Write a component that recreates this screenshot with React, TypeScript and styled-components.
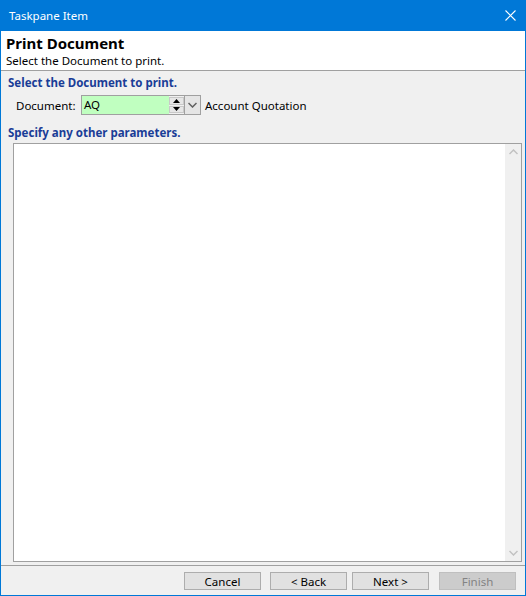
import React from 'react'
import styled, { createGlobalStyle } from 'styled-components'

const Global = createGlobalStyle`
  html, body {
    margin: 0;
    padding: 0;
    background: #ffffff;
  }
  * {
    box-sizing: border-box;
  }
`

const Window = styled.div`
  width: 526px;
  height: 596px;
  display: flex;
  flex-direction: column;
  border: 1px solid #0078d7;
  border-top: none;
  background: #f0f0f0;
  font-family: 'Noto Sans', 'Open Sans', sans-serif;
  font-size: 11.5px;
  color: #000000;
  overflow: hidden;
`

const TitleBar = styled.div`
  height: 31px;
  flex: none;
  display: flex;
  align-items: center;
  justify-content: space-between;
  background: #0078d7;
  color: #ffffff;
  padding-left: 9px;
  margin: 0 -1px;
`

const TitleText = styled.span`
  font-size: 11.5px;
  padding-bottom: 1px;
`

const CloseBtn = styled.div`
  width: 32px;
  height: 31px;
  display: flex;
  align-items: center;
  justify-content: center;
`

const Header = styled.div`
  height: 40px;
  flex: none;
  background: #ffffff;
  border-bottom: 1px solid #a0a0a0;
  padding: 2px 5px 0;
`

const HeaderTitle = styled.div`
  font-weight: 700;
  font-size: 15px;
  line-height: 20px;
`

const HeaderSub = styled.div`
  font-size: 11.5px;
  line-height: 15px;
`

const Body = styled.div`
  flex: 1;
  display: flex;
  flex-direction: column;
  padding: 4px 3px 0 7px;
  min-height: 0;
`

const Section = styled.div<{ $top?: number }>`
  color: #1a3d97;
  font-weight: 700;
  font-size: 11.5px;
  line-height: 16px;
  margin-top: ${(p) => p.$top ?? 0}px;
`

const DocRow = styled.div`
  display: flex;
  align-items: center;
  height: 20px;
  margin-top: 4px;
  padding-left: 8px;
`

const Label = styled.span`
  width: 65px;
`

const Combo = styled.div`
  display: flex;
  width: 120px;
  height: 20px;
  border: 1px solid #a0a0a0;
  background: #c0ffc0;
`

const ComboText = styled.div`
  flex: 1;
  padding-left: 2px;
  line-height: 17px;
`

const Spinner = styled.div`
  width: 15px;
  display: flex;
  flex-direction: column;
  justify-content: center;
  gap: 1px;
  background: #f0f0f0;
  padding: 1px 0;
`

const SpinBtn = styled.div`
  flex: 1;
  display: flex;
  align-items: center;
  justify-content: center;
  background: #e6e6e6;
  border: 1px solid #c8c8c8;
`

const DropBtn = styled.div`
  width: 16px;
  display: flex;
  align-items: center;
  justify-content: center;
  background: #e5e5e5;
  border-left: 1px solid #a0a0a0;
`

const DocName = styled.span`
  margin-left: 4px;
`

const Panel = styled.div`
  flex: 1;
  display: flex;
  margin: 2px 0 3px 5px;
  border: 1px solid #a0a0a0;
  background: #ffffff;
`

const PanelArea = styled.div`
  flex: 1;
`

const ScrollBar = styled.div`
  width: 16px;
  display: flex;
  flex-direction: column;
  justify-content: space-between;
  align-items: center;
  background: #f0f0f0;
  padding: 5px 0;
`

const Footer = styled.div`
  height: 30px;
  flex: none;
  display: flex;
  justify-content: flex-end;
  align-items: flex-start;
  border-top: 1px solid #a0a0a0;
  padding: 6px 9px 0 0;
`

const Button = styled.div<{ $gap: number; $disabled?: boolean }>`
  width: 77px;
  height: 18px;
  margin-left: ${(p) => p.$gap}px;
  display: flex;
  align-items: center;
  justify-content: center;
  background: ${(p) => (p.$disabled ? '#cccccc' : '#e1e1e1')};
  border: 1px solid ${(p) => (p.$disabled ? '#bfbfbf' : '#adadad')};
  color: ${(p) => (p.$disabled ? '#838383' : '#000000')};
  font-size: 11.5px;
`

const Chevron = ({ up, color }: { up?: boolean; color: string }) => (
  <svg width="9" height="6" viewBox="0 0 9 6">
    <path
      d={up ? 'M0.5 5 L4.5 1 L8.5 5' : 'M0.5 1 L4.5 5 L8.5 1'}
      fill="none"
      stroke={color}
      strokeWidth="1.5"
    />
  </svg>
)

const Tri = ({ up }: { up?: boolean }) => (
  <svg width="7" height="4" viewBox="0 0 7 4">
    <path d={up ? 'M0 4 L3.5 0 L7 4 Z' : 'M0 0 L3.5 4 L7 0 Z'} fill="#000" />
  </svg>
)

const App = () => {
  return (
    <>
      <Global />
      <Window>
        <TitleBar>
          <TitleText>Taskpane Item</TitleText>
          <CloseBtn>
            <svg width="11" height="11" viewBox="0 0 11 11">
              <path d="M0.5 0.5 L10.5 10.5 M10.5 0.5 L0.5 10.5" stroke="#fff" strokeWidth="1.1" />
            </svg>
          </CloseBtn>
        </TitleBar>
        <Header>
          <HeaderTitle>Print Document</HeaderTitle>
          <HeaderSub>Select the Document to print.</HeaderSub>
        </Header>
        <Body>
          <Section>Select the Document to print.</Section>
          <DocRow>
            <Label>Document:</Label>
            <Combo>
              <ComboText>AQ</ComboText>
              <Spinner>
                <SpinBtn>
                  <Tri up />
                </SpinBtn>
                <SpinBtn>
                  <Tri />
                </SpinBtn>
              </Spinner>
              <DropBtn>
                <Chevron color="#606060" />
              </DropBtn>
            </Combo>
            <DocName>Account Quotation</DocName>
          </DocRow>
          <Section $top={10}>Specify any other parameters.</Section>
          <Panel>
            <PanelArea />
            <ScrollBar>
              <Chevron up color="#c2c2c2" />
              <Chevron color="#c2c2c2" />
            </ScrollBar>
          </Panel>
        </Body>
        <Footer>
          <Button $gap={0}>Cancel</Button>
          <Button $gap={9}>&lt; Back</Button>
          <Button $gap={5}>Next &gt;</Button>
          <Button $gap={10} $disabled>
            Finish
          </Button>
        </Footer>
      </Window>
    </>
  )
}

export default App
